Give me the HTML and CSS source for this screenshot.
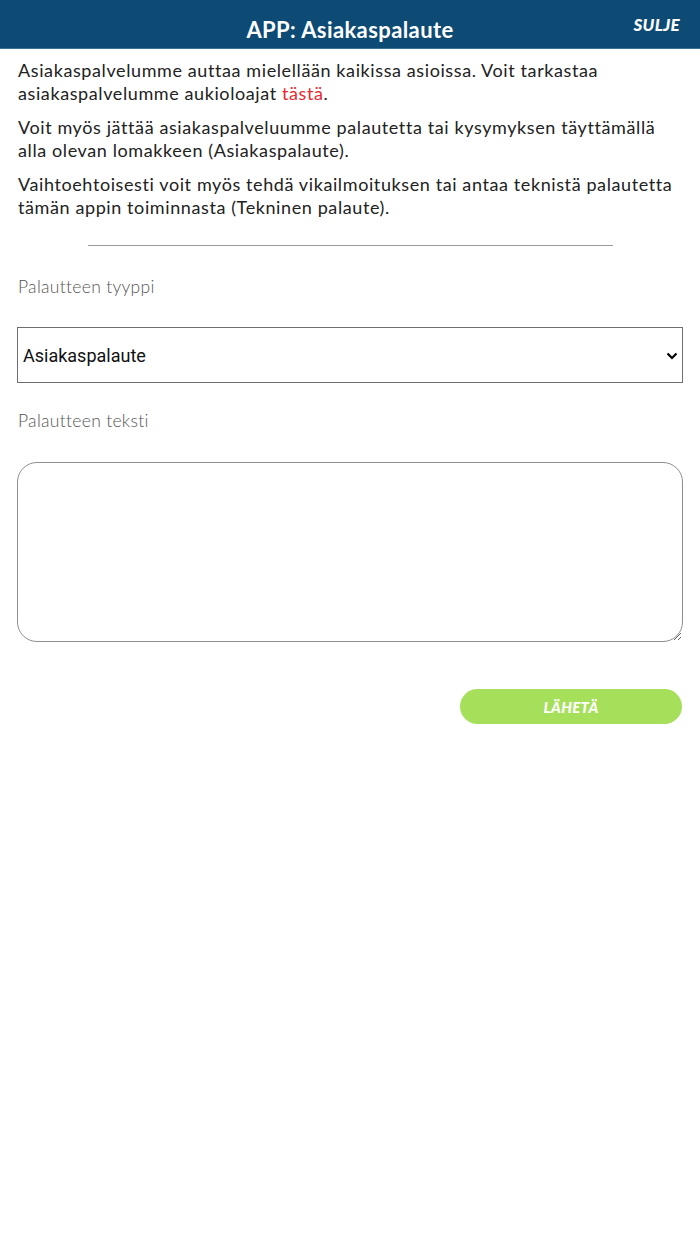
FILE: index.html
```html
<!DOCTYPE html>
<html lang="fi">
<head>
<meta charset="utf-8">
<title>APP: Asiakaspalaute</title>
<link rel="stylesheet" href="styles.css">
</head>
<body>
<header class="topbar">
  <h1 class="title">APP: Asiakaspalaute</h1>
  <button class="close">SULJE</button>
</header>
<main class="content">
  <p class="intro">Asiakaspalvelumme auttaa mielellään kaikissa asioissa. Voit tarkastaa asiakaspalvelumme aukioloajat <a class="link" href="#">tästä</a>.</p>
  <p class="intro">Voit myös jättää asiakaspalveluumme palautetta tai kysymyksen täyttämällä alla olevan lomakkeen (Asiakaspalaute).</p>
  <p class="intro">Vaihtoehtoisesti voit myös tehdä vikailmoituksen tai antaa teknistä palautetta tämän appin toiminnasta (Tekninen palaute).</p>
  <hr class="divider">
  <form class="form">
    <label class="label" for="type">Palautteen tyyppi</label>
    <div class="select-wrap">
      <select id="type" class="select">
        <option>Asiakaspalaute</option>
        <option>Tekninen palaute</option>
      </select>
      <svg class="chevron" width="12" height="8" viewBox="0 0 12 8"><path d="M1.5 1.5 L6 6 L10.5 1.5" fill="none" stroke="#000" stroke-width="2.2"/></svg>
    </div>
    <label class="label label-text" for="text">Palautteen teksti</label>
    <textarea id="text" class="textarea"></textarea>
    <div class="actions">
      <button type="button" class="send">LÄHETÄ</button>
    </div>
  </form>
</main>
</body>
</html>
```

FILE: styles.css
```css
* { box-sizing: border-box; }
html, body { margin: 0; padding: 0; background: #fff; }
body { font-family: "Lato", "Open Sans", sans-serif; color: #222; }

.topbar {
  height: 49px;
  background: #0d4b75;
  border-bottom: 1px solid #3a6f96;
  display: flex;
  align-items: center;
  justify-content: center;
  position: relative;
}
.title {
  margin: 0;
  padding-top: 10px;
  font-size: 22px;
  font-weight: 700;
  letter-spacing: 0.4px;
  color: #fff;
}
.close {
  position: absolute;
  right: 20px;
  top: 14px;
  background: none;
  border: 0;
  padding: 0;
  color: #fff;
  font-family: "Lato", sans-serif;
  font-weight: 900;
  font-style: italic;
  font-size: 17px;
  letter-spacing: 0.3px;
}

.content { padding: 10px 18px 0 18px; }
.intro {
  margin: 0 0 11px 0;
  font-size: 18px;
  line-height: 23px;
  letter-spacing: 0.6px;
  color: #222;
}
.link { color: #e8282f; text-decoration: none; }

.divider {
  width: 525px;
  margin: 26px auto 0;
  border: 0;
  border-top: 1.5px solid #9a9a9a;
}

.form { display: flex; flex-direction: column; }
.label {
  margin-top: 30px;
  font-size: 17.5px;
  color: #555;
  font-weight: 300;
  line-height: 22px;
  letter-spacing: 0.3px;
}
.label-text { margin-top: 27px; }
.select-wrap { position: relative; margin-top: 29px; margin-left: -1px; }
.select {
  appearance: none;
  -webkit-appearance: none;
  width: 666px;
  height: 56px;
  border: 1px solid #6f6f6f;
  border-radius: 0;
  background: #fff;
  font-family: "Roboto", sans-serif;
  font-size: 18px;
  color: #111;
  padding: 0 0 0 5px;
}
.chevron { position: absolute; right: 4px; top: 25px; }

.textarea {
  margin-top: 30px;
  margin-left: -1px;
  width: 666px;
  height: 180px;
  border: 1px solid #8e8e8e;
  border-radius: 20px;
  font-family: "Lato", sans-serif;
  font-size: 17px;
  padding: 10px;
}

.actions { display: flex; justify-content: flex-end; margin-top: 47px; }
.send {
  width: 222px;
  height: 35px;
  border: 0;
  border-radius: 18px;
  background: #a6e05a;
  color: #fff;
  font-family: "Lato", sans-serif;
  font-weight: 900;
  font-style: italic;
  font-size: 15px;
  letter-spacing: 0.3px;
}
```
